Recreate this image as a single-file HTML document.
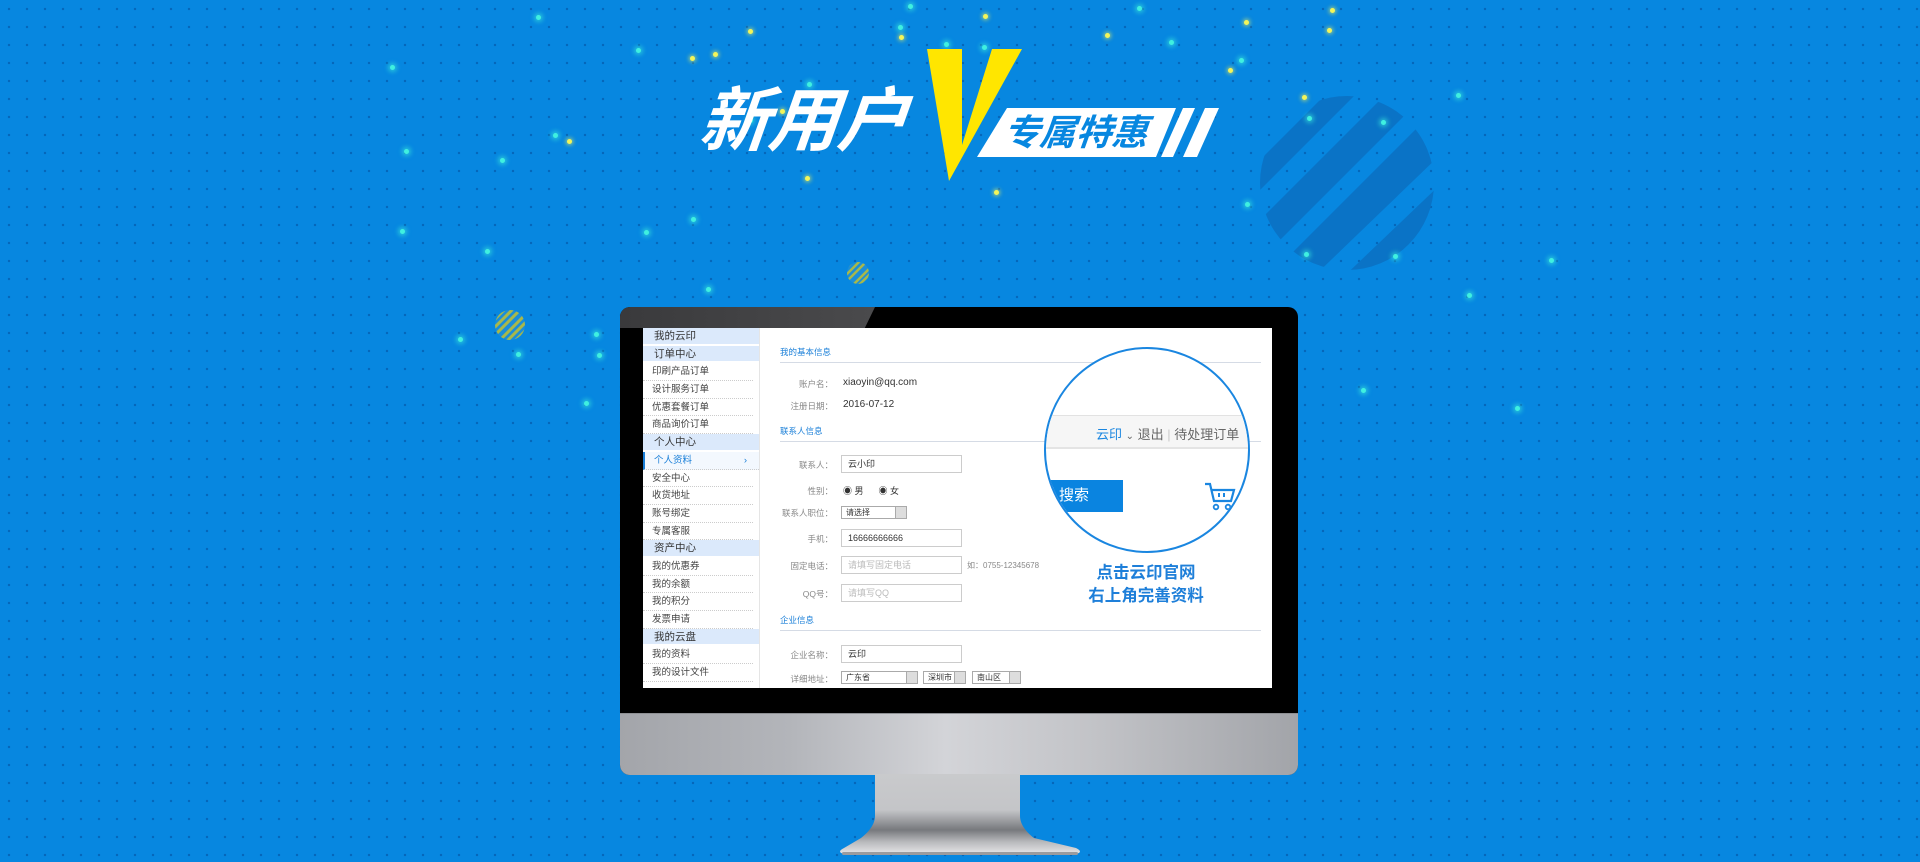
<!DOCTYPE html>
<html><head><meta charset="utf-8"><style>
*{margin:0;padding:0;box-sizing:border-box}
body{width:1920px;height:862px;overflow:hidden;position:relative;background:#0787e0;font-family:"Liberation Sans","Noto Sans CJK SC",sans-serif}
.grid{position:absolute;inset:0;background-image:radial-gradient(circle,rgba(0,40,110,.35) 1px,transparent 1.4px);background-size:18px 18px}
.d{position:absolute;width:5px;height:5px;border-radius:50%}
.y{background:#f3f55a;box-shadow:0 0 4px 1px rgba(240,245,90,.7)}
.c{background:#3ff0e0;box-shadow:0 0 5px 2px rgba(60,240,220,.6)}
.abs{position:absolute}
.scr{position:absolute;left:643px;top:328px;width:629px;height:360px;background:#fff;overflow:hidden;font-size:9px;color:#555}
.side{position:absolute;left:0;top:0;width:116px}
.row{height:17.7px;line-height:17.7px;padding-left:9px;font-size:9.5px;color:#444;border-bottom:1px dotted #ccc;margin:0 6px 0 0}
.row.h{background:#dbe9fb;font-size:10.5px;color:#333;border-bottom:2px solid #fff;margin:0;padding-left:11px}
.row.a{color:#1a7fd8;border-left:2px solid #1a7fd8;background:#f3f8fe;margin:0}
.sec{position:absolute;left:137px;width:481px;color:#1a7fd8;font-size:8.5px;border-bottom:1px solid #d5dbe5;padding-bottom:4px}
.lb{position:absolute;width:110px;left:80px;text-align:right;font-size:8.5px;color:#888}
.in{position:absolute;left:198px;width:121px;height:18px;border:1px solid #ccc;font-size:9px;line-height:16px;padding-left:6px;color:#333}
.ph{color:#bbb}
.sel{position:absolute;height:13px;border:1px solid #aaa;font-size:8px;line-height:11px;padding-left:4px;color:#333}
.sel:after{content:"";position:absolute;right:0;top:0;width:10px;height:11px;background:#ddd;border-left:1px solid #aaa}
</style></head><body>
<div class="grid"></div>

<svg class="abs" style="left:1255px;top:95px" width="185" height="185" viewBox="0 0 185 185">
<defs><clipPath id="cc"><circle cx="92" cy="88" r="87"/></clipPath></defs>
<g clip-path="url(#cc)" fill="#0a73c6">
<polygon points="0,70 70,0 100,0 0,100"/>
<polygon points="0,130 125,5 150,20 10,160"/>
<polygon points="25,170 170,25 185,60 50,190"/>
<polygon points="80,190 190,85 190,200"/>
</g></svg>
<svg class="abs" style="left:494px;top:309px" width="32" height="32"><defs><clipPath id="c2"><circle cx="16" cy="16" r="15"/></clipPath></defs><circle cx="16" cy="16" r="15" fill="#1b8ed9"/><g clip-path="url(#c2)" stroke="#a8b84a" stroke-width="3"><path d="M-5,16 16,-5M-5,24 24,-5M-5,32 32,-5M0,37 37,0M8,37 37,8M16,37 37,16M24,37 37,24"/></g></svg>
<svg class="abs" style="left:847px;top:262px" width="23" height="23"><defs><clipPath id="c3"><circle cx="11" cy="11" r="11"/></clipPath></defs><circle cx="11" cy="11" r="11" fill="#1b8ed9"/><g clip-path="url(#c3)" stroke="#a8b84a" stroke-width="2.5"><path d="M-5,10 10,-5M-5,17 17,-5M-5,24 24,-5M0,29 29,0M6,29 29,6M13,29 29,13"/></g></svg>

<div class="d c" style="left:390px;top:65px"></div><div class="d c" style="left:404px;top:149px"></div>
<div class="d c" style="left:500px;top:158px"></div><div class="d y" style="left:567px;top:139px"></div>
<div class="d c" style="left:536px;top:15px"></div><div class="d c" style="left:636px;top:48px"></div>
<div class="d y" style="left:690px;top:56px"></div><div class="d y" style="left:713px;top:52px"></div>
<div class="d y" style="left:748px;top:29px"></div><div class="d c" style="left:748px;top:118px"></div>
<div class="d y" style="left:780px;top:109px"></div><div class="d y" style="left:805px;top:176px"></div>
<div class="d c" style="left:807px;top:82px"></div><div class="d c" style="left:898px;top:25px"></div>
<div class="d c" style="left:908px;top:4px"></div><div class="d y" style="left:899px;top:35px"></div>
<div class="d y" style="left:994px;top:190px"></div>
<div class="d y" style="left:983px;top:14px"></div><div class="d c" style="left:944px;top:42px"></div>
<div class="d c" style="left:982px;top:45px"></div><div class="d y" style="left:1105px;top:33px"></div>
<div class="d c" style="left:1137px;top:6px"></div><div class="d y" style="left:1244px;top:20px"></div>
<div class="d y" style="left:1228px;top:68px"></div><div class="d c" style="left:1239px;top:58px"></div>
<div class="d y" style="left:1330px;top:8px"></div><div class="d y" style="left:1327px;top:28px"></div>
<div class="d c" style="left:1169px;top:40px"></div>
<div class="d c" style="left:1307px;top:116px"></div>
<div class="d y" style="left:1302px;top:95px"></div><div class="d c" style="left:1381px;top:120px"></div>
<div class="d c" style="left:1456px;top:93px"></div><div class="d c" style="left:1245px;top:202px"></div>
<div class="d c" style="left:1304px;top:252px"></div><div class="d c" style="left:1393px;top:254px"></div>
<div class="d c" style="left:1549px;top:258px"></div><div class="d c" style="left:1467px;top:293px"></div>
<div class="d c" style="left:1361px;top:388px"></div><div class="d c" style="left:1515px;top:406px"></div>
<div class="d c" style="left:691px;top:217px"></div><div class="d c" style="left:644px;top:230px"></div>
<div class="d c" style="left:485px;top:249px"></div><div class="d c" style="left:400px;top:229px"></div>
<div class="d c" style="left:706px;top:287px"></div><div class="d c" style="left:458px;top:337px"></div>
<div class="d c" style="left:516px;top:352px"></div><div class="d c" style="left:594px;top:332px"></div>
<div class="d c" style="left:597px;top:353px"></div><div class="d c" style="left:584px;top:401px"></div>
<div class="d c" style="left:553px;top:133px"></div>

<!-- title -->
<div class="abs" style="left:700px;top:76px;font-size:70px;line-height:90px;font-weight:bold;font-style:italic;color:#fff;letter-spacing:-1px;transform:skewX(-6deg)">新用户</div>
<svg class="abs" style="left:0;top:0" width="1300" height="200">
<polygon points="927,49 962,49 962,145 992,49 1022,49 949,181" fill="#ffe600"/>
<polygon points="1007,108 1176,108 1156,157 977,157" fill="#fff"/>
<polygon points="1183,108 1195,108 1173,157 1161,157" fill="#fff"/>
<polygon points="1205,108 1219,108 1197,157 1183,157" fill="#fff"/>
</svg>
<div class="abs" style="left:1004px;top:108px;font-size:36px;font-weight:bold;font-style:italic;color:#0787e0;line-height:49px;transform:skewX(-6deg)">专属特惠</div>

<!-- monitor -->
<div class="abs" style="left:620px;top:307px;width:678px;height:468px;border-radius:10px;overflow:hidden;background:#000">
 <div class="abs" style="left:0;top:0;width:255px;height:21px;background:linear-gradient(90deg,#3a3a3c,#4a4a4c);clip-path:polygon(0 0,100% 0,96% 100%,0 100%)"></div>
 <div class="abs" style="left:0;top:406px;width:678px;height:62px;background:linear-gradient(90deg,#a3a5aa 0%,#b3b5ba 25%,#d3d4d8 48%,#c2c3c7 70%,#a2a4a9 100%);border-top:1px solid #8d8f93"></div>
</div>
<svg class="abs" style="left:836px;top:774px" width="248" height="84">
<defs><linearGradient id="sg" x1="0" y1="0" x2="0" y2="1"><stop offset="0" stop-color="#c9cacc"/><stop offset=".45" stop-color="#c4c5c8"/><stop offset=".7" stop-color="#77797d"/><stop offset=".85" stop-color="#b9babd"/><stop offset="1" stop-color="#e6e6e8"/></linearGradient></defs>
<path d="M39,0 H184 V42 C184,50 190,58 198,64 L240,74 Q248,78 240,80 H8 Q0,78 8,74 L25,64 C33,58 39,50 39,42 Z" fill="url(#sg)"/>
<rect x="6" y="78" width="236" height="3" rx="1.5" fill="#9a9b9e"/>
</svg>

<div class="scr">
 <div class="side">
  <div class="row h">我的云印</div><div class="row h">订单中心</div>
  <div class="row">印刷产品订单</div><div class="row">设计服务订单</div><div class="row">优惠套餐订单</div><div class="row">商品询价订单</div>
  <div class="row h">个人中心</div>
  <div class="row a">个人资料<span style="float:right;margin-right:12px">›</span></div>
  <div class="row">安全中心</div><div class="row">收货地址</div><div class="row">账号绑定</div><div class="row">专属客服</div>
  <div class="row h">资产中心</div>
  <div class="row">我的优惠券</div><div class="row">我的余额</div><div class="row">我的积分</div><div class="row">发票申请</div>
  <div class="row h">我的云盘</div>
  <div class="row">我的资料</div><div class="row">我的设计文件</div>
 </div>
 <div class="abs" style="left:116px;top:0;width:1px;height:360px;background:#e5e5e5"></div>
 <div class="sec" style="top:18px">我的基本信息</div>
 <div class="lb" style="top:50px">账户名：</div><div class="abs" style="left:200px;top:49px;font-size:10px;color:#333">xiaoyin@qq.com</div>
 <div class="lb" style="top:72px">注册日期：</div><div class="abs" style="left:200px;top:71px;font-size:10px;color:#333">2016-07-12</div>
 <div class="sec" style="top:97px">联系人信息</div>
 <div class="lb" style="top:131px">联系人：</div><div class="in" style="top:127px">云小印</div>
 <div class="lb" style="top:157px">性别：</div>
 <div class="abs" style="left:200px;top:156px;font-size:9px;color:#333">◉ 男 &nbsp;&nbsp;&nbsp;&nbsp; ◉ 女</div>
 <div class="lb" style="top:179px">联系人职位：</div><div class="sel" style="left:198px;top:178px;width:66px">请选择</div>
 <div class="lb" style="top:205px">手机：</div><div class="in" style="top:201px">16666666666</div>
 <div class="lb" style="top:232px">固定电话：</div><div class="in ph" style="top:228px">请填写固定电话</div>
 <div class="abs" style="left:324px;top:232px;font-size:8px;color:#888">如：0755-12345678</div>
 <div class="lb" style="top:260px">QQ号：</div><div class="in ph" style="top:256px">请填写QQ</div>
 <div class="sec" style="top:286px">企业信息</div>
 <div class="lb" style="top:321px">企业名称：</div><div class="in" style="top:317px">云印</div>
 <div class="lb" style="top:345px">详细地址：</div>
 <div class="sel" style="left:198px;top:343px;width:77px">广东省</div>
 <div class="sel" style="left:280px;top:343px;width:43px">深圳市</div>
 <div class="sel" style="left:329px;top:343px;width:49px">南山区</div>
</div>

<!-- magnifier -->
<div class="abs" style="left:1044px;top:347px;width:206px;height:206px;border-radius:50%;border:2.5px solid #1a86e0;background:#fff;overflow:hidden">
 <div class="abs" style="left:0;top:66px;width:210px;height:34px;background:#f6f6f6;border-top:1px solid #e2e2e2;border-bottom:2px solid #e4e4e4"></div>
 <div class="abs" style="left:50px;top:75px;font-size:13px;color:#666;white-space:nowrap"><span style="color:#1a86e0">云印</span> <span style="font-size:10px">⌄</span> 退出 <span style="color:#ccc">|</span> 待处理订单</div>
 <div class="abs" style="left:0;top:131px;width:77px;height:32px;background:#0a84e0;color:#fff;font-size:15px;line-height:32px;padding-left:13px">搜索</div>
 <svg class="abs" style="left:158px;top:133px" width="32" height="30" viewBox="0 0 32 30"><path d="M1,2 H6 L10,19 H27 L30,8 H8" fill="none" stroke="#1a86e0" stroke-width="2.2"/><path d="M15,11 V15 M20,11 V15" stroke="#1a86e0" stroke-width="2"/><circle cx="12" cy="25" r="2.3" fill="none" stroke="#1a86e0" stroke-width="1.8"/><circle cx="24" cy="25" r="2.3" fill="none" stroke="#1a86e0" stroke-width="1.8"/></svg>
</div>
<div class="abs" style="left:1046px;top:562px;width:200px;text-align:center;color:#1e7fd9;font-size:16.5px;font-weight:bold;line-height:23px">点击云印官网<br>右上角完善资料</div>
</body></html>
